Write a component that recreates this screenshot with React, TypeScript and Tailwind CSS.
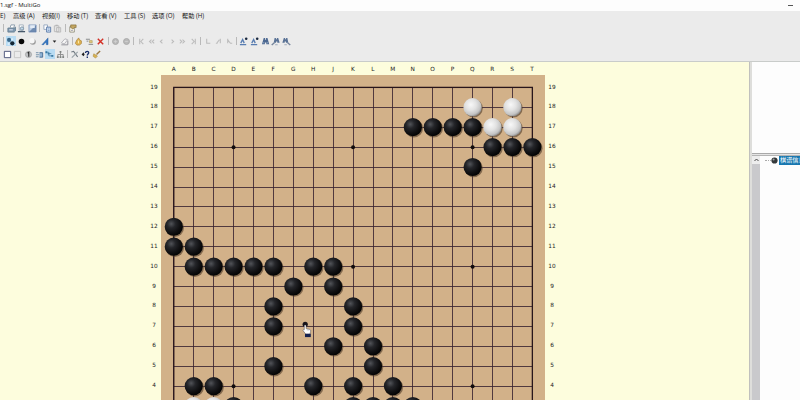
import type { ReactNode } from 'react';
import clsx from 'clsx';

const COLS = 'ABCDEFGHJKLMNOPQRST'.split('');
const ROWS = Array.from({ length: 19 }, (_, i) => 19 - i);

const BLACK =
  'N17 O17 P17 Q17 R16 S16 T16 Q15 A12 A11 B11 B10 C10 D10 E10 F10 H10 J10 G9 J9 F8 K8 F7 K7 J6 L6 F5 L5 B4 C4 H4 K4 M4 D3 K3 L3 M3 N3'.split(' ');
const WHITE = 'Q18 S18 R17 S17 B3 C3'.split(' ');
const STARS = 'D16 K16 Q16 D10 K10 Q10 D4 K4 Q4'.split(' ');

const MENU = [
  { label: 'E)', w: 'w-[13px]' },
  { label: '高级 (A)', w: 'w-[29px]' },
  { label: '视频(I)', w: 'w-[25px]' },
  { label: '移动 (T)', w: 'w-[28px]' },
  { label: '查看 (V)', w: 'w-[29px]' },
  { label: '工具 (S)', w: 'w-[28px]' },
  { label: '选项 (O)', w: 'w-[30px]' },
  { label: '帮助 (H)', w: 'w-[30px]' },
];

// board geometry, in board-local pixels
const STEP = 19.92;
const LEFT = 12.8;
const TOP = 12.4;

function at(p: string) {
  return {
    x: LEFT + COLS.indexOf(p[0]) * STEP,
    y: TOP + (19 - Number(p.slice(1))) * STEP,
  };
}

export default function App() {
  return (
    <div className="flex h-[400px] w-[800px] flex-col overflow-hidden bg-[#ebebeb] font-['Open_Sans','Noto_Sans_CJK_SC',sans-serif] text-[#151515]">
      <header className="flex h-[10.5px] shrink-0 items-center justify-between bg-[#fdfdfd]">
        <span className="whitespace-pre text-[6px] leading-[10px]">1.sgf - MultiGo</span>
        <span className="mr-[7px] h-px w-[5px] bg-[#555]" />
      </header>

      <nav className="flex h-[10px] shrink-0 items-center text-[6.2px] leading-[9px]">
        {MENU.map((m) => (
          <span key={m.label} className={clsx('shrink-0 whitespace-nowrap', m.w)}>
            {m.label}
          </span>
        ))}
      </nav>

      <Toolbars />

      <main className="flex min-h-0 flex-1 border-t border-[#c9ccca]">
        <section className="flex w-[749px] shrink-0 justify-center bg-[#fdfddd] pr-[43px] font-['DejaVu_Sans',sans-serif] text-[5.8px] text-[#222]">
          <RowLabels />
          <div className="w-[384px] shrink-0">
            <div className="ml-[2.8px] flex h-[13px] pt-[2.5px]">
              {COLS.map((c) => (
                <span key={c} className="w-[19.92px] shrink-0 text-center leading-[9px]">{c}</span>
              ))}
            </div>
            <Board />
          </div>
          <RowLabels />
        </section>
        <div className="w-[3px] shrink-0 border-l border-[#c0c0bd] bg-[#dededb]" />
        <SidePanel />
      </main>
    </div>
  );
}

function RowLabels() {
  return (
    <div className="w-[14px] shrink-0 pt-[15.5px]">
      {/* rows below 4 are scrolled out of view */}
      {ROWS.slice(0, 16).map((r) => (
        <div key={r} className="h-[19.92px] text-center leading-[19.92px]">{r}</div>
      ))}
    </div>
  );
}

function Board() {
  const end = 18 * STEP;
  return (
    <svg width="384" height="384" className="block bg-[#d2b189]">
      <defs>
        <radialGradient id="black" cx="0.36" cy="0.34" r="0.65">
          <stop offset="0" stopColor="#515358" />
          <stop offset="0.35" stopColor="#25262a" />
          <stop offset="0.75" stopColor="#101012" />
          <stop offset="1" stopColor="#050505" />
        </radialGradient>
        <radialGradient id="white" cx="0.4" cy="0.36" r="0.68">
          <stop offset="0" stopColor="#f8f8f8" />
          <stop offset="0.45" stopColor="#e2e2e2" />
          <stop offset="0.8" stopColor="#c4c4c4" />
          <stop offset="1" stopColor="#858585" />
        </radialGradient>
      </defs>
      {ROWS.map((_, i) => (
        <g key={i} stroke="#3a2430" strokeWidth="0.85">
          <path d={`M${LEFT} ${Math.floor(TOP + i * STEP) + 0.5}h${end}`} />
          <path d={`M${Math.floor(LEFT + i * STEP) + 0.5} ${TOP}v${end}`} />
        </g>
      ))}
      <rect x={LEFT} y={TOP} width={end} height={end} fill="none" stroke="#28151b" strokeWidth="1.3" />
      {STARS.map((p) => (
        <circle key={p} cx={at(p).x} cy={at(p).y} r="2" fill="#110b0c" />
      ))}
      {BLACK.map((p) => (
        <Stone key={p} point={p} fill="url(#black)" />
      ))}
      {WHITE.map((p) => (
        <Stone key={p} point={p} fill="url(#white)" />
      ))}
      {/* hand cursor holding the next stone */}
      <g transform="translate(140.6 246.5)">
        <circle cx="3.6" cy="2.8" r="2.6" fill="#16131a" />
        <g transform="translate(0.4 1.3)">
          <path
            d="M3.1 2.2c.9 0 1 .5 1 1v2.6l3.7.9c.8.3 1 .7.9 1.5l-.7 3.1H3.7L1.2 8c-.6-1 .5-1.7 1.1-1V3.2c0-.5.1-1 .8-1Z"
            fill="#fff"
            stroke="#3c3c46"
            strokeWidth="0.45"
          />
          <path d="M5.3 6.2v1.7M6.8 6.6v1.5" stroke="#999" strokeWidth="0.4" />
          <path d="M3 11h5.8v3.3H3z" fill="#15224f" />
        </g>
      </g>
    </svg>
  );
}

function Stone({ point, fill }: { point: string; fill: string }) {
  const { x, y } = at(point);
  return (
    <g>
      <circle cx={x + 1} cy={y + 1} r="9.2" fill="#4f3b28" opacity="0.6" />
      <circle cx={x} cy={y - 0.1} r="9.1" fill={fill} />
    </g>
  );
}

function SidePanel() {
  return (
    <aside className="flex min-w-0 flex-1 flex-col bg-[#fdfdfd]">
      <div className="h-[92px] shrink-0 border-b border-[#a9a9a9]" />
      <div className="h-px shrink-0 bg-[#e5e5e5]" />
      <div className="flex min-h-0 flex-1 border-t border-[#b5b5b5]">
        <div className="flex w-[8px] shrink-0 flex-col bg-[#c9c9cc]">
          <div className="flex h-[8px] items-center justify-center bg-[#ededed]">
            <svg width="5" height="4" viewBox="0 0 5 4" fill="none" stroke="#444" strokeWidth="1">
              <path d="M.5 3l2-2 2 2" />
            </svg>
          </div>
        </div>
        <div className="flex h-[9px] min-w-0 flex-1 items-center overflow-hidden pl-[5px]">
          <span className="w-[6px] shrink-0 border-t border-dotted border-[#aaa]" />
          <svg width="7" height="7" viewBox="0 0 7 7" className="shrink-0">
            <circle cx="3.5" cy="3.5" r="3.1" fill="#34383a" />
            <circle cx="2.6" cy="2.4" r="1" fill="#9da3a5" />
          </svg>
          <span className="ml-px h-[9px] shrink-0 whitespace-nowrap bg-[#1877b0] px-px text-[6.2px] leading-[8.5px] text-white">
            棋谱信息
          </span>
        </div>
      </div>
    </aside>
  );
}

/* ---- toolbars ---- */

function Cell({ w = 'w-[10.6px]', on = false, children }: { w?: string; on?: boolean; children: ReactNode }) {
  return (
    <div className={clsx('flex h-[10px] shrink-0 items-center justify-center', w)}>
      <div className={clsx('flex size-[10px] items-center justify-center', on && 'bg-[#b9dcf3]')}>
        <svg width="9" height="9" viewBox="0 0 10 10" fill="none" strokeWidth="1">
          {children}
        </svg>
      </div>
    </div>
  );
}

function Sep({ m }: { m: string }) {
  return <span className={clsx('h-[8px] w-px shrink-0 bg-[#b9b9b9]', m)} />;
}

function Arrow({ d }: { d: string }) {
  return (
    <Cell w="w-[10.4px]">
      <path d={d} stroke="#bcbcbc" strokeWidth="1.2" />
    </Cell>
  );
}

function Binoculars({ tail = '' }: { tail?: string }) {
  return (
    <>
      <path d="M3 1h1.6v2h1V1h1.6l1.9 7H5.9V6H4.3v2H1.1Z" fill="#4c6891" />
      <path d="M2.5 6.5h1M6.6 6.5h1" stroke="#b4c7df" />
      <path d={tail} stroke="#75859c" strokeWidth="1.4" />
    </>
  );
}

// small search glass, used by the find previous / next buttons
function FindStep({ flip = false }: { flip?: boolean }) {
  return (
    <g transform={flip ? 'translate(10 0) scale(-1 1)' : undefined}>
      <path d="M4 1h1.5v1.6h1V1H8l1.6 5.5H7V5H5.6v1.5H3Z" fill="#587195" />
      <path d="M.8 9 3.8 6.4" stroke="#75859c" strokeWidth="1.5" />
      <path d="M4.6 8.6h2.8" stroke="#9aa7b8" />
    </g>
  );
}

function Toolbars() {
  return (
    <div className="flex h-[40.5px] shrink-0 flex-col pt-px">
      <div className="flex h-[13.2px] items-center">
        <Sep m="ml-[3px] mr-[2px]" />
        {/* print, preview, save */}
        <Cell>
          <path d="M3.5 4l1-3h4l-1 3" fill="#fff" stroke="#8797a8" />
          <path d="M1 4.5h7l1.5-1v4L8 9H1Z" fill="#7e98ae" stroke="#6a8194" />
          <path d="M2.5 6.5h4" stroke="#eef" />
        </Cell>
        <Cell>
          <path d="M2.5 1H7v6H2.5z" fill="#fff" stroke="#a0adba" />
          <circle cx="5.5" cy="5" r="1.8" fill="#c3dbea" stroke="#7b8fa2" />
          <path d="M1 8.5h8" stroke="#47596b" strokeWidth="1.4" />
        </Cell>
        <Cell>
          <path d="M1 1h8v8H1z" fill="#bccde4" stroke="#8ea4c2" />
          <path d="M9 1v8H1Z" fill="#5474a0" opacity="0.75" />
          <path d="M2.5 1.5h5v3h-5z" fill="#e4ecf6" />
        </Cell>
        <Sep m="mx-[1.6px]" />
        <Cell>
          <path d="M1 1h4v5H1z" fill="#fff" stroke="#93a5bd" />
          <path d="M4 3.5h4.5V9H4z" fill="#d7e7fa" stroke="#5878a6" />
          <path d="M5.3 5.5h2M5.3 7.2h2" stroke="#5878a6" strokeWidth="0.7" />
        </Cell>
        <Cell>
          <path d="M1.5 2h5v6.5h-5zM4 4h4.5v5H4z" fill="#e5e5e5" stroke="#b9b9b9" />
          <path d="M2.8 1.4h2.5" stroke="#aaa" />
        </Cell>
        <Sep m="mx-[1.5px]" />
        <Cell>
          <path d="M2 3h5v6H2z" fill="#fffdf2" stroke="#92907f" />
          <path d="M3 1h6v3H7L5.5 5.5 3 4Z" fill="#c2a662" stroke="#80672f" strokeWidth="0.7" />
          <path d="M3.4 7h2" stroke="#557" strokeWidth="0.7" />
        </Cell>
      </div>

      <div className="flex h-[13.2px] items-center">
        <Sep m="ml-[3px] mr-[1.7px]" />
        <Cell on>
          <circle cx="3.4" cy="3.2" r="2.3" fill="#3a688a" />
          <circle cx="7" cy="7" r="2.4" fill="#142534" />
          <path d="M5.8 2.3h2M2 7.7l2 .2" stroke="#e9f5fd" strokeWidth="1.5" />
        </Cell>
        <Cell>
          <circle cx="5" cy="5" r="3.1" fill="#080808" />
        </Cell>
        <Cell>
          <circle cx="5.4" cy="5.4" r="3.3" fill="#9b9b9b" />
          <circle cx="4.4" cy="4.2" r="3" fill="#f6f6f6" />
        </Cell>
        <Cell w="ml-[1.8px] w-[12px]">
          <path d="M1 8.5 7.8 1v7.5H5.9V6.4H4.4L3 8.5Z" fill="#3477c4" stroke="#245b9a" strokeWidth="0.5" />
        </Cell>
        <Cell w="w-[7px]">
          <path d="M3 4h4L5 6.3Z" fill="#222" />
        </Cell>
        <Cell w="w-[12px]">
          <path d="M1.5 6.5 5.5 2l3 1-3.7 4.7Z" fill="#f6f6f6" stroke="#b0b0b5" />
          <path d="M1.5 8.7h7.2V4" stroke="#8b8b93" />
        </Cell>
        <Sep m="ml-[2px] mr-[0.3px]" />
        <Cell>
          <path d="M3 3.5 5.2 1l1 2.2 2 1.1v3L6 9H3.2L1.5 7Z" fill="#e0b452" stroke="#a2772b" strokeWidth="0.7" />
          <path d="M5 4v3" stroke="#fff1b3" />
        </Cell>
        <Cell>
          <path d="M1 2.5h4.5M1.8 4.6h2M4 8.2h5" stroke="#7f8183" />
          <path d="M5 4h3v2.4H5z" fill="#e4ca7b" stroke="#b09a5c" strokeWidth="0.7" />
        </Cell>
        <Cell>
          <path d="m2 2 6 6M8 2 2 8" stroke="#d32e24" strokeWidth="1.6" />
        </Cell>
        <Sep m="ml-[2.2px] mr-[1.8px]" />
        <Cell>
          <circle cx="5" cy="5" r="3.3" fill="#bababa" stroke="#a8a8a8" />
          <path d="M3.5 5h3M5 3.5v3" stroke="#d0d0d0" />
        </Cell>
        <Cell>
          <circle cx="5" cy="5" r="3.3" fill="#bababa" stroke="#a8a8a8" />
          <path d="M3.5 5h3" stroke="#d0d0d0" />
        </Cell>
        <Sep m="ml-[1.5px] mr-[2px]" />
        <Arrow d="M3 2v6M7 2 4.3 5 7 8" />
        <Arrow d="M5 3 2.8 5 5 7M8 3 5.8 5 8 7" />
        <Arrow d="M6 3 3.8 5 6 7" />
        <Arrow d="M4 3l2.2 2L4 7" />
        <Arrow d="M2 3l2.2 2L2 7M5 3l2.2 2L5 7" />
        <Arrow d="M3 2l2.7 3L3 8M7 2v6" />
        <Sep m="mx-[2px]" />
        <Arrow d="M3 2v5h4" />
        <Arrow d="M7 2v5M6 3 3 7h1" />
        <Arrow d="M3 2v5M3 3l3 4h2" />
        <Sep m="ml-[1.7px] mr-[1.4px]" />
        <Cell>
          <path d="M1 8.5h7M2 6.8l2-4 1.8 4" stroke="#587db1" strokeWidth="1.5" />
          <circle cx="8" cy="2" r="1.4" fill="#18263d" />
        </Cell>
        <Cell>
          <path d="M1 8.5h7M2 6.8l2-4 1.8 4" stroke="#587db1" strokeWidth="1.5" />
          <circle cx="8" cy="2" r="1.4" fill="#18263d" />
        </Cell>
        <Cell>
          <Binoculars />
        </Cell>
        <Cell>
          <FindStep />
        </Cell>
        <Cell>
          <FindStep flip />
        </Cell>
      </div>

      <div className="flex h-[13.2px] items-center pl-[2px]">
        <Cell>
          <path d="M1.5 1.5h7v7h-7z" fill="#fff" stroke="#424c73" />
        </Cell>
        <Cell>
          <path d="M1.5 1.5h7v7h-7z" stroke="#c3c3c3" />
        </Cell>
        <Cell>
          <circle cx="5" cy="5" r="3.4" fill="#c0c2c4" stroke="#979797" strokeWidth="0.7" />
          <path d="M4 3.4 5.3 2.6v5" stroke="#292929" strokeWidth="1.2" />
        </Cell>
        <Cell>
          <path d="M1 3h3M1 5.3h4M1 7.5h3" stroke="#6d8aa4" />
          <path d="M5 3h3.5v5H5" fill="#8fb2d3" stroke="#436a92" />
        </Cell>
        <Cell on>
          <path d="M1 2.5h3.2v4H9M4.2 4H7" stroke="#5a90b4" />
          <path d="M.5 1.5h2v2h-2zM3 3h2v2H3zM7 5.5h2.2v2H7z" fill="#3c7aa3" />
        </Cell>
        <Cell>
          <path d="M5 2v3M2 8V5h6v3M5 5v3" stroke="#8a8a8a" />
          <path d="M4 1h2v2H4zM1 7h2v2H1zM4 7h2v2H4zM7 7h2v2H7z" fill="#7f8380" />
        </Cell>
        <Sep m="ml-[1.2px] mr-[1.8px]" />
        <Cell>
          <path d="M1.5 2.3 4 1.5 8.5 7.7" stroke="#6f7880" strokeWidth="1.2" />
          <path d="M8.5 2 2 8.5" stroke="#9aa3a9" strokeWidth="1.3" />
        </Cell>
        <Cell>
          <path d="M.6 5 2.8 2.6 4 5 2.8 7Z" fill="#222" />
          <path d="M5 3.2C5 .8 8.8 1 8.5 3.2 8.3 4.4 7 4.4 7 6M7 7.3v1.5" stroke="#172c68" strokeWidth="1.5" />
        </Cell>
        <Cell>
          <path d="M9 1 5 5" stroke="#9b7944" strokeWidth="1.6" />
          <path d="M2 4.2 6 6.8 4 9 1.2 7Z" fill="#dbb552" stroke="#a88436" strokeWidth="0.6" />
        </Cell>
      </div>
    </div>
  );
}
